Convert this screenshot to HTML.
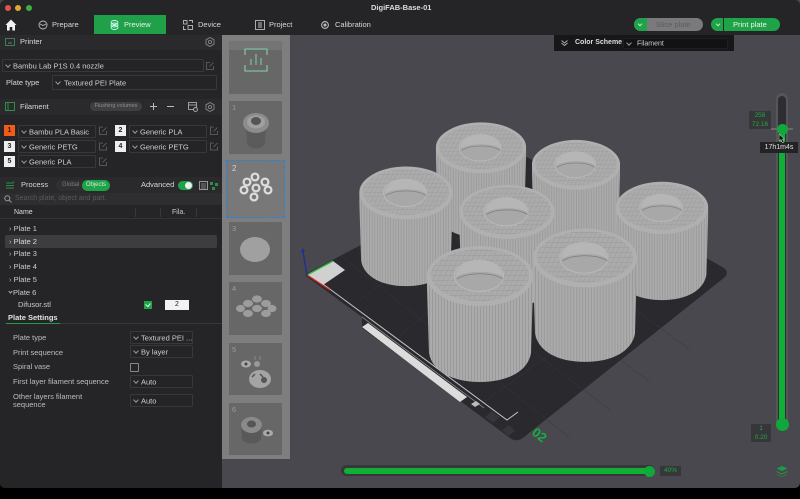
<!DOCTYPE html>
<html><head><meta charset="utf-8"><style>
*{box-sizing:border-box}
html,body{margin:0;padding:0;background:#000}
body{width:800px;height:499px;overflow:hidden;position:relative;font-family:"Liberation Sans",sans-serif;color:#d8d8d8;font-size:7.5px;filter:blur(.35px)}
.a{position:absolute;white-space:nowrap}
.t{position:absolute;white-space:nowrap;line-height:10px;height:10px}
.dd{position:absolute;border:1px solid #38383b;background:#242427;border-radius:1px;color:#cfcfcf;font-size:7.5px;white-space:nowrap;overflow:hidden}
.dd:before{content:"";position:absolute;left:3px;top:50%;width:3px;height:3px;margin-top:-3px;border-right:1px solid #999;border-bottom:1px solid #999;transform:rotate(45deg)}
.dd span{position:absolute;left:10px;top:50%;transform:translateY(-50%)}
.box{position:absolute;width:11px;height:11px;background:#eee;color:#222;text-align:center;font-size:7px;line-height:11px;font-weight:bold}
.ed{position:absolute;width:7px;height:7px;border:1px solid #666;border-radius:1px}
.th{position:absolute;left:229px;width:53px;background:#676767;color:#9c9c9c;font-size:7.5px}
.th b{font-weight:normal;position:absolute;left:3px;top:2px}
svg{position:absolute;overflow:visible}
</style></head><body>
<div class="a" style="left:0;top:0;width:800px;height:488px;background:#49484e;border-radius:0 0 5px 5px;overflow:hidden"></div>
<!-- title/top bar -->
<div class="a" style="left:0;top:0;width:800px;height:35px;background:#252528;border-radius:5px 5px 0 0"></div>
<div class="a" style="left:5px;top:5px;width:6px;height:6px;border-radius:50%;background:#e0564c"></div>
<div class="a" style="left:15px;top:5px;width:6px;height:6px;border-radius:50%;background:#e0a92d"></div>
<div class="a" style="left:26px;top:5px;width:6px;height:6px;border-radius:50%;background:#3cb046"></div>
<div class="t" style="left:371px;top:3px;font-size:7.5px;font-weight:bold;color:#ddd">DigiFAB-Base-01</div>
<svg style="left:5px;top:19px" width="12" height="12" viewBox="0 0 12 12"><path d="M6 .5 L11.500 6 L10 6 V11.500 H7.300 V8 H4.700 V11.500 H2 V6 H.5 Z" fill="#f2f2f2"/></svg>
<svg style="left:38px;top:20px" width="10" height="10" viewBox="0 0 10 10" fill="none" stroke="#bbb" stroke-width=".9"><circle cx="5" cy="5" r="4"/><path d="M2 4 L5 5.500 L8 4"/></svg>
<div class="t" style="left:52px;top:20px;font-size:7.5px">Prepare</div>
<div class="a" style="left:94px;top:15px;width:72px;height:19px;background:#20a048"></div>
<svg style="left:110px;top:20px" width="9" height="10" viewBox="0 0 9 10" fill="none" stroke="#cfe" stroke-width=".9"><ellipse cx="4.500" cy="2.500" rx="3.500" ry="2"/><ellipse cx="4.500" cy="5" rx="3.500" ry="2"/><ellipse cx="4.500" cy="7.500" rx="3.500" ry="2"/></svg>
<div class="t" style="left:124px;top:20px;font-size:7.5px;color:#e8f5ea">Preview</div>
<svg style="left:183px;top:20px" width="10" height="10" viewBox="0 0 10 10" fill="none" stroke="#bbb" stroke-width=".9"><rect x=".5" y=".5" width="3.500" height="3.500"/><rect x="5" y="5.500" width="4.500" height="4"/><path d="M6 .5H9.500V3M.5 6V9.500H3"/></svg>
<div class="t" style="left:198px;top:20px;font-size:7.5px">Device</div>
<svg style="left:255px;top:20px" width="10" height="10" viewBox="0 0 10 10" fill="none" stroke="#bbb" stroke-width=".9"><rect x=".5" y=".5" width="9" height="9"/><path d="M3 3H7M3 5H7M3 7H7"/></svg>
<div class="t" style="left:269px;top:20px;font-size:7.5px">Project</div>
<svg style="left:320px;top:20px" width="10" height="10" viewBox="0 0 10 10" fill="none" stroke="#bbb" stroke-width="1.100"><circle cx="5" cy="5" r="3.400"/><circle cx="5" cy="5" r="1" fill="#bbb"/></svg>
<div class="t" style="left:335px;top:20px;font-size:7.5px">Calibration</div>
<!-- top-right buttons -->
<div class="a" style="left:634px;top:18px;width:69px;height:13px;border-radius:7px;background:#7a7a7c;overflow:hidden"><div class="a" style="left:0;top:0;width:13px;height:13px;background:#1fa348"></div></div>
<div class="a" style="left:638px;top:22px;width:4px;height:4px;border-right:1px solid #dfd;border-bottom:1px solid #dfd;transform:rotate(45deg) scale(.8)"></div>
<div class="t" style="left:656px;top:20px;font-size:7.5px;color:#5c5c5e">Slice plate</div>
<div class="a" style="left:711px;top:18px;width:69px;height:13px;border-radius:7px;background:#1fa348"><div class="a" style="left:12px;top:0;width:1px;height:13px;background:#252528"></div></div>
<div class="a" style="left:716px;top:22px;width:4px;height:4px;border-right:1px solid #dfd;border-bottom:1px solid #dfd;transform:rotate(45deg) scale(.8)"></div>
<div class="t" style="left:733px;top:20px;font-size:7.5px;color:#f0f5f0">Print plate</div>
<!-- viewport bed and cylinders -->
<svg style="left:0;top:0" width="800" height="499" viewBox="0 0 800 499">
<defs>
<pattern id="st" width="3" height="3" patternUnits="userSpaceOnUse"><rect width="3" height="3" fill="#ababab"/><rect width="1" height="3" fill="#9a9a9a"/></pattern>
<pattern id="hx" width="5" height="5" patternUnits="userSpaceOnUse" patternTransform="skewX(-25)"><rect width="5" height="5" fill="#ababab"/><path d="M0 0H5M0 0V5" stroke="#979797" stroke-width=".8"/></pattern>
<g id="cy">
<path d="M-53 0 C-53 -16 -28 -28 0 -28 C28 -28 53 -16 53 0 L53 12 L51 78 C48 96 28 107 0 107 C-28 107 -48 96 -51 78 L-53 12Z" fill="url(#st)"/>
<ellipse cx="0" cy="1" rx="53" ry="30" fill="#b0b0b0"/>
<ellipse cx="0" cy="0" rx="49" ry="26" fill="url(#hx)"/>
<ellipse cx="-1" cy="1" rx="24.500" ry="15.500" fill="#a8a8a8" stroke="#b8b8b8" stroke-width="1.200"/>
<path d="M-24 2 C-24 -9 -12 -14 0 -14 C12 -14 22 -8 23 2 C15 -5 -14 -5 -24 2Z" fill="#b6b6b6"/>
<path d="M-23 4 C-12 -3 12 -3 23 4" stroke="#7c7c7c" stroke-width=".7" fill="none"/>
</g>
</defs>
<path d="M306 274 L527 157 L724 268 Q729 272 725 277 L524 437 Q517 443 510 438 L362 328 L362 317 L306 276Z" fill="#2a2a2e"/>
<g stroke="#36363b" stroke-width=".5"><path d="M340 255L570 438M380 235L610 410M420 212L650 382M470 188L690 350M360 300L560 145M400 335L610 170M440 370L660 200M480 405L700 245"/></g>
<path d="M323 284 L507 420 L518 412" fill="none" stroke="#c5c5c5" stroke-width="1"/>
<path d="M362 317 L484 408" fill="none" stroke="#999" stroke-width=".7"/>
<path d="M368 323 L467 397 L460 402 L362 327Z" fill="#dcdcdc"/>
<path d="M471 404l5-3 4 3-5 3z" fill="#bbb"/>
<path d="M485 417l7-6 8 6-7 6zM502 430l7-5 6 6-7 5z" fill="#36363a"/>
<g><path d="M308 275 L333 261 L345 270 L323 285Z" fill="#d0d0d0"/>
<path d="M307 275 L333 261" stroke="#2fbb3c" stroke-width="1.300"/>
<path d="M307 275 L330 290" stroke="#d22" stroke-width="1.300"/>
<path d="M307 275 L303 252" stroke="#1a2e9c" stroke-width="1.300"/>
<path d="M301 252L303 248L305 252Z" fill="#1a2e9c"/></g>
<g transform="translate(481,147) scale(.85)"><use href="#cy"/></g>
<g transform="translate(576,164) scale(.83)"><use href="#cy"/></g>
<g transform="translate(406,192) scale(.88)"><use href="#cy"/></g>
<g transform="translate(507,211) scale(.9)"><use href="#cy"/></g>
<g transform="translate(662,207) scale(.87)"><use href="#cy"/></g>
<g transform="translate(585,257) scale(.98)"><use href="#cy"/></g>
<g transform="translate(480,275)"><use href="#cy"/></g>
<text x="531" y="434" transform="rotate(38 531 434)" font-family="Liberation Sans" font-size="13" font-weight="bold" fill="#15b040">02</text>
</svg>
<!-- thumbnails -->
<div class="a" style="left:222px;top:35px;width:68px;height:424px;background:#7e7e7e"></div>
<div class="th" style="top:50px;height:44px"></div>
<div class="a" style="left:229px;top:41px;width:53px;height:9px;background:#747474"></div>
<svg style="left:244px;top:48px" width="24" height="24" viewBox="0 0 24 24" fill="none" stroke="#7db094" stroke-width="1.400"><path d="M1 6V1H23V6M1 18V23H23V18"/><path d="M1 1V23M23 1V23" stroke-dasharray="6 10"/><path d="M7 17V11M12 17V6M17 17V10"/></svg>
<div class="th" style="top:101px;height:53px"><b>1</b></div>
<svg style="left:243px;top:112px" width="26" height="38" viewBox="0 0 26 38"><path d="M3 13 L4 32 C8 38 18 38 22 32 L23 13Z" fill="#5b5b5b"/><ellipse cx="13" cy="11" rx="13" ry="10" fill="#8c8c8c"/><ellipse cx="13" cy="10" rx="9" ry="6.500" fill="#a0a0a0"/><ellipse cx="13" cy="9" rx="5" ry="4" fill="#555"/></svg>
<div class="a" style="left:226px;top:160px;width:59px;height:58px;background:#787878;border:1px dashed #1887ea"></div>
<div class="a" style="left:232px;top:164px;color:#d5d5d5;font-size:8px">2</div>
<svg style="left:239px;top:171px" width="34" height="34" viewBox="0 0 34 34" fill="none"><g fill="#777" stroke="#dcdcdc" stroke-width="2.300"><circle cx="16" cy="6" r="3.400"/><circle cx="8" cy="11" r="3.400"/><circle cx="26" cy="11" r="3.400"/><circle cx="5" cy="19" r="3.400"/><circle cx="17" cy="17" r="3.400"/><circle cx="29" cy="19" r="3.400"/><circle cx="15" cy="26" r="3.400"/></g></svg>
<div class="th" style="top:222px;height:53px"><b>3</b></div>
<div class="a" style="left:240px;top:237px;width:30px;height:25px;border-radius:50%;background:#a0a0a0"></div>
<div class="th" style="top:282px;height:53px"><b>4</b></div>
<svg style="left:236px;top:294px" width="40" height="24" viewBox="0 0 40 24" fill="#9c9c9c"><ellipse cx="21" cy="5" rx="5" ry="3.600"/><ellipse cx="12" cy="9.500" rx="5" ry="3.600"/><ellipse cx="30" cy="9.500" rx="5" ry="3.600"/><ellipse cx="4.500" cy="14.500" rx="4.500" ry="3.600"/><ellipse cx="21" cy="14.500" rx="5" ry="3.600"/><ellipse cx="36" cy="14.500" rx="4.500" ry="3.600"/><ellipse cx="12" cy="19.500" rx="5" ry="3.600"/><ellipse cx="30" cy="19.500" rx="5" ry="3.600"/></svg>
<div class="th" style="top:343px;height:52px"><b>5</b></div>
<svg style="left:240px;top:355px" width="34" height="36" viewBox="0 0 34 36"><ellipse cx="6" cy="9" rx="5" ry="3.500" fill="#aaa"/><circle cx="6" cy="9" r="1.500" fill="#444"/><rect x="14" y="6" width="6" height="6" rx="3" fill="#999"/><path d="M15 1V5M20 1V5" stroke="#888"/><ellipse cx="20" cy="24" rx="11" ry="9" fill="#a4a4a4"/><circle cx="24" cy="25" r="3" fill="#555"/><path d="M12 22l3-3M20 19l3 3" stroke="#555" stroke-width="1.500"/></svg>
<div class="th" style="top:403px;height:52px"><b>6</b></div>
<svg style="left:241px;top:417px" width="36" height="28" viewBox="0 0 36 28"><path d="M0 8 L1 22 C4 28 17 28 20 22 L21 8Z" fill="#595959"/><ellipse cx="10.500" cy="8" rx="10.500" ry="8" fill="#8a8a8a"/><ellipse cx="10.500" cy="7" rx="4.500" ry="3.500" fill="#555"/><ellipse cx="27" cy="16" rx="5" ry="3.300" fill="#aaa"/><circle cx="27" cy="16" r="1.500" fill="#444"/></svg>
<!-- sidebar -->
<div class="a" style="left:0;top:35px;width:222px;height:453px;background:#252528;border-radius:0 0 0 5px"></div>
<div class="a" style="left:0;top:35px;width:222px;height:15px;background:#2a2a2d"></div>
<svg style="left:5px;top:38px" width="10" height="9" viewBox="0 0 10 9" fill="none" stroke="#3f7d58"><rect x=".5" y=".5" width="9" height="7"/><path d="M3 5H7" stroke="#777"/></svg>
<div class="t" style="left:20px;top:37px;font-size:7.500px">Printer</div>
<svg style="left:205px;top:37px" width="10" height="10" viewBox="0 0 10 10" fill="none" stroke="#888" stroke-width=".9"><path d="M5 .5L9 2.800V7.200L5 9.500L1 7.200V2.800Z"/><circle cx="5" cy="5" r="1.600"/></svg>
<div class="dd" style="left:2px;top:59px;width:202px;height:13px"><span style="left:10px;font-size:7.500px">Bambu Lab P1S 0.4 nozzle</span></div>
<svg style="left:206px;top:62px" width="8" height="8" viewBox="0 0 8 8" fill="none" stroke="#666" stroke-width=".8"><path d="M4 .5H.5V7.500H7.500V4M3.500 4.500L7.500 .5"/></svg>
<div class="t" style="left:6px;top:78px">Plate type</div>
<div class="dd" style="left:52px;top:75px;width:165px;height:15px"><span style="left:11px">Textured PEI Plate</span></div>
<div class="a" style="left:0;top:99px;width:222px;height:16px;background:#2a2a2d"></div>
<svg style="left:5px;top:102px" width="10" height="9" viewBox="0 0 10 9" fill="none" stroke="#2f8c4c"><rect x=".5" y=".5" width="9" height="8"/><path d="M3 1V8"/></svg>
<div class="t" style="left:20px;top:102px">Filament</div>
<div class="a" style="left:90px;top:102px;width:52px;height:9px;border-radius:5px;background:#3f3f42;color:#8d8d8d;font-size:5.500px;line-height:9px;text-align:center">Flushing volumes</div>
<div class="a" style="left:150px;top:106px;width:7px;height:1px;background:#bbb"></div><div class="a" style="left:153px;top:103px;width:1px;height:7px;background:#bbb"></div>
<div class="a" style="left:167px;top:106px;width:7px;height:1px;background:#bbb"></div>
<svg style="left:188px;top:102px" width="10" height="10" viewBox="0 0 10 10" fill="none" stroke="#aaa" stroke-width=".9"><rect x=".5" y=".5" width="8" height="7"/><path d="M.5 3H8.500"/><circle cx="7.500" cy="7.500" r="2" fill="#333"/></svg>
<svg style="left:205px;top:102px" width="10" height="10" viewBox="0 0 10 10" fill="none" stroke="#888" stroke-width=".9"><path d="M5 .5L9 2.800V7.200L5 9.500L1 7.200V2.800Z"/><circle cx="5" cy="5" r="1.600"/></svg>
<!-- filaments -->
<div class="box" style="left:4px;top:125px;background:#f25c19">1</div>
<div class="dd" style="left:18px;top:125px;width:78px;height:13px"><span style="left:10px">Bambu PLA Basic</span></div>
<div class="box" style="left:115px;top:125px">2</div>
<div class="dd" style="left:129px;top:125px;width:78px;height:13px"><span style="left:10px">Generic PLA</span></div>
<div class="box" style="left:4px;top:141px">3</div>
<div class="dd" style="left:18px;top:140px;width:78px;height:13px"><span style="left:10px">Generic PETG</span></div>
<div class="box" style="left:115px;top:141px">4</div>
<div class="dd" style="left:129px;top:140px;width:78px;height:13px"><span style="left:10px">Generic PETG</span></div>
<div class="box" style="left:4px;top:156px">5</div>
<div class="dd" style="left:18px;top:155px;width:78px;height:13px"><span style="left:10px">Generic PLA</span></div>
<svg style="left:0;top:0" width="222" height="170" fill="none" stroke="#666" stroke-width=".8"><path id="e" d="M103 127H99.500V134.500H106.500V131M102.500 131.500L106.500 127.500"/><path d="M214 127H210.500V134.500H217.500V131M213.500 131.500L217.500 127.500"/><path d="M103 143H99.500V150H106.500V146.500M102.500 147L106.500 143"/><path d="M214 143H210.500V150H217.500V146.500M213.500 147L217.500 143"/><path d="M103 158H99.500V165.500H106.500V162M102.500 162.500L106.500 158.500"/></svg>
<!-- process -->
<div class="a" style="left:0;top:177px;width:222px;height:16px;background:#2a2a2d"></div>
<svg style="left:5px;top:180px" width="10" height="10" viewBox="0 0 10 10" fill="none" stroke="#2f8c4c"><path d="M1 3H8L9 1.500M1 5.500H9M1 8H9"/></svg>
<div class="t" style="left:21px;top:180px">Process</div>
<div class="a" style="left:56px;top:180px;width:54px;height:11px;background:#303033;border-radius:6px"></div>
<div class="t" style="left:62px;top:181px;font-size:6px;line-height:9px;color:#7d7d7d">Global</div>
<div class="a" style="left:82px;top:180px;width:28px;height:11px;background:#1fa348;border-radius:6px;color:#d6ecd9;font-size:6px;line-height:11px;text-align:center">Objects</div>
<div class="t" style="left:141px;top:180px">Advanced</div>
<div class="a" style="left:178px;top:181px;width:15px;height:9px;background:#1fa348;border-radius:5px"><div class="a" style="right:1px;top:1px;width:7px;height:7px;border-radius:50%;background:#eee"></div></div>
<svg style="left:199px;top:181px" width="20" height="10" viewBox="0 0 20 10" fill="none"><rect x=".5" y=".5" width="8" height="8" stroke="#999"/><path d="M2 3H7M2 5H7M2 7H7" stroke="#999" stroke-width=".7"/><rect x="11" y="1" width="3" height="3" fill="#2f8c4c"/><rect x="16" y="2" width="3" height="3" fill="#2f8c4c"/><rect x="13" y="6" width="3" height="3" fill="#2f8c4c"/></svg>
<div class="a" style="left:0;top:193px;width:222px;height:12px;background:#2e2e31"></div>
<svg style="left:4px;top:195px" width="8" height="8" viewBox="0 0 8 8" fill="none" stroke="#999"><circle cx="3.300" cy="3.300" r="2.500"/><path d="M5 5L7.500 7.500"/></svg>
<div class="t" style="left:15px;top:194px;font-size:7px;color:#595959">Search plate, object and part.</div>
<div class="a" style="left:0;top:218px;width:222px;height:1px;background:#333336"></div>
<div class="t" style="left:14px;top:208px;font-size:7px;color:#ddd">Name</div>
<div class="t" style="left:172px;top:208px;font-size:7px;color:#ccc">Fila.</div>
<div class="a" style="left:135px;top:208px;width:1px;height:9px;background:#38383b"></div>
<div class="a" style="left:160px;top:208px;width:1px;height:9px;background:#38383b"></div>
<div class="a" style="left:196px;top:208px;width:1px;height:9px;background:#38383b"></div>
<div class="a" style="left:5px;top:235px;width:212px;height:13px;background:#3d3d40;border-radius:2px"></div>
<div class="t" style="left:9px;top:224px;color:#bbb">› <span style="color:#ccc">Plate 1</span></div>
<div class="t" style="left:9px;top:237px;color:#bbb">› <span style="color:#ddd">Plate 2</span></div>
<div class="t" style="left:9px;top:249px;color:#bbb">› <span style="color:#ccc">Plate 3</span></div>
<div class="t" style="left:9px;top:262px;color:#bbb">› <span style="color:#ccc">Plate 4</span></div>
<div class="t" style="left:9px;top:275px;color:#bbb">› <span style="color:#ccc">Plate 5</span></div>
<div class="a" style="left:9px;top:290px;width:3px;height:3px;border-right:1px solid #aaa;border-bottom:1px solid #aaa;transform:rotate(45deg)"></div>
<div class="t" style="left:13px;top:288px;color:#ccc">Plate 6</div>
<div class="t" style="left:18px;top:300px;color:#ccc">Difusor.stl</div>
<div class="a" style="left:144px;top:301px;width:8px;height:8px;background:#1fa348"></div>
<svg style="left:145px;top:302px" width="6" height="6" viewBox="0 0 6 6" fill="none" stroke="#dfd"><path d="M.5 2.500L3 4.500L5.500 1.500"/></svg>
<div class="a" style="left:165px;top:300px;width:24px;height:10px;background:#f2f2f2;color:#222;text-align:center;line-height:10px;font-size:7px">2</div>
<!-- plate settings -->
<div class="a" style="left:0;top:311px;width:222px;height:177px;background:#252528;border-radius:0 0 0 5px"></div>
<div class="t" style="left:8px;top:313px;font-weight:bold;color:#e2e2e2;font-size:7.500px">Plate Settings</div>
<div class="a" style="left:5px;top:323px;width:217px;height:1px;background:#38383b"></div>
<div class="a" style="left:6px;top:323px;width:54px;height:1px;background:#1f9d45"></div>
<div class="t" style="left:13px;top:333px;color:#bdbdbd">Plate type</div>
<div class="dd" style="left:130px;top:331px;width:63px;height:13px"><span style="left:10px">Textured PEI ...</span></div>
<div class="t" style="left:13px;top:348px;color:#bdbdbd">Print sequence</div>
<div class="dd" style="left:130px;top:345px;width:63px;height:13px"><span style="left:10px">By layer</span></div>
<div class="t" style="left:13px;top:362px;color:#bdbdbd">Spiral vase</div>
<div class="a" style="left:130px;top:363px;width:9px;height:9px;border:1px solid #888;border-radius:1px"></div>
<div class="t" style="left:13px;top:377px;color:#bdbdbd">First layer filament sequence</div>
<div class="dd" style="left:130px;top:375px;width:63px;height:13px"><span style="left:10px">Auto</span></div>
<div class="t" style="left:13px;top:392px;color:#bdbdbd">Other layers filament</div>
<div class="t" style="left:13px;top:400px;color:#bdbdbd">sequence</div>
<div class="dd" style="left:130px;top:394px;width:63px;height:13px"><span style="left:10px">Auto</span></div>
<!-- color scheme -->
<div class="a" style="left:554px;top:35px;width:180px;height:16px;background:#17171a"></div>
<svg style="left:561px;top:40px" width="7" height="6" viewBox="0 0 7 6" fill="none" stroke="#aaa"><path d="M.5 .5L3.500 3L6.500 .5M.5 3L3.500 5.500L6.500 3"/></svg>
<div class="t" style="left:575px;top:38px;font-size:7px;font-weight:bold;color:#ddd">Color Scheme</div>
<div class="dd" style="left:623px;top:38px;width:105px;height:11px;background:#121214;border-color:#1f1f22"><span style="left:13px;font-size:7px">Filament</span></div>
<!-- vertical slider -->
<div class="a" style="left:776px;top:93px;width:12px;height:336px;background:#55555a;border-radius:6px"></div>
<div class="a" style="left:778px;top:96px;width:8px;height:330px;background:#2d2d32;border-radius:4px"></div>
<div class="a" style="left:779px;top:130px;width:6px;height:294px;background:#10b036"></div>
<div class="a" style="left:771px;top:128px;width:22px;height:2px;background:#68686c"></div>
<div class="a" style="left:776.500px;top:124px;width:11px;height:11px;border-radius:50%;background:#10a83a"></div>
<div class="a" style="left:775.500px;top:418px;width:13px;height:13px;border-radius:50%;background:#10a83a"></div>
<div class="a" style="left:749px;top:111px;width:22px;height:18px;background:#37373a;color:#1fa843;text-align:center;font-size:6.500px;line-height:8.500px;padding-top:1px">258<br>72.16</div>
<div class="a" style="left:751px;top:424px;width:20px;height:18px;background:#37373a;color:#1fa843;text-align:center;font-size:6.500px;line-height:8.500px;padding-top:1px">1<br>0.20</div>
<div class="a" style="left:760px;top:142px;width:38px;height:11px;background:#232326;color:#e0e0e0;text-align:center;font-size:7px;line-height:11px">17h1m4s</div>
<svg style="left:778px;top:134px" width="7" height="10" viewBox="0 0 7 10"><path d="M1 0V7L3 5.500L4.500 9L6 8L4.500 5H6.500Z" fill="#111" stroke="#eee" stroke-width=".5"/></svg>
<!-- horizontal slider -->
<div class="a" style="left:341px;top:465px;width:314px;height:11px;background:#37373b;border-radius:6px"></div>
<div class="a" style="left:344px;top:468px;width:306px;height:6px;background:#10b036;border-radius:3px"></div>
<div class="a" style="left:644px;top:465.500px;width:11px;height:11px;border-radius:50%;background:#10a83a"></div>
<div class="a" style="left:660px;top:466px;width:21px;height:10px;background:#37373a;color:#1fa843;text-align:center;font-size:6.500px;line-height:10px">40%</div>
<svg style="left:776px;top:466px" width="12" height="11" viewBox="0 0 12 11" fill="#1b9b43"><path d="M6 0L11.500 2.500L6 5L.5 2.500Z"/><path d="M.5 5L6 7.500L11.500 5L11.500 6L6 8.500L.5 6Z"/><path d="M.5 8L6 10.500L11.500 8L11.500 8.500L6 11L.5 8.500Z"/></svg>
</body></html>
